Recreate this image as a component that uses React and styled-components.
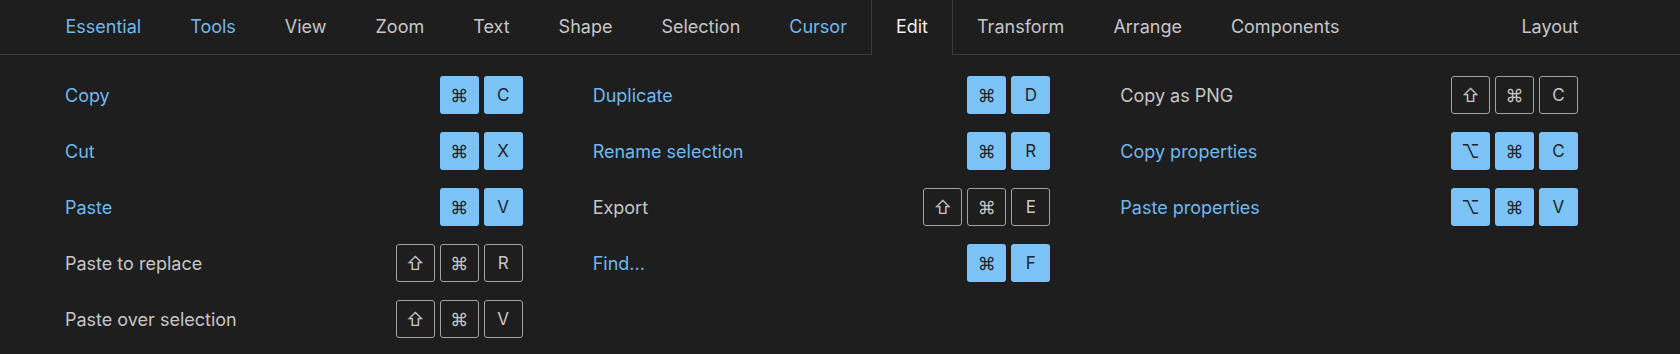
import styled, { createGlobalStyle } from "styled-components";

const GlobalStyle = createGlobalStyle`
  body {
    margin: 0;
    background-color: #1e1e1e;
    font-family: Inter, "Noto Sans", "DejaVu Sans", sans-serif;
  }
`;

const colors = {
  blue: "#70b8ee",
  gray: "#c6c6c6",
  white: "#eeeeee",
};

const Page = styled.div`
  width: 1680px;
  height: 354px;
  background-color: #1e1e1e;
  overflow: hidden;
`;

const TabBar = styled.nav`
  display: flex;
  height: 54px;
  padding: 0 77px 0 41px;
  border-bottom: 1px solid #3a3a3a;
`;

const Tab = styled.div`
  display: flex;
  align-items: center;
  padding: 0 23.5px 2px;
  font-size: 18px;
  color: ${(props) => colors[props.$tone]};
  border-left: 1px solid ${(props) => (props.$active ? "#3a3a3a" : "transparent")};
  border-right: 1px solid ${(props) => (props.$active ? "#3a3a3a" : "transparent")};
  margin-bottom: ${(props) => (props.$active ? "-1px" : "0")};
  background-color: #1e1e1e;
  margin-left: ${(props) => (props.$push ? "auto" : "0")};
`;

const Panel = styled.div`
  display: grid;
  grid-template-columns: repeat(3, 1fr);
  column-gap: 70px;
  padding: 21px 102px 0 65px;
`;

const Column = styled.div`
  display: flex;
  flex-direction: column;
  gap: 18px;
`;

const Row = styled.div`
  display: flex;
  align-items: center;
  justify-content: space-between;
  height: 38px;
`;

const Label = styled.span`
  font-size: 18px;
  color: ${(props) => (props.$on ? colors.blue : colors.gray)};
`;

const Keys = styled.div`
  display: flex;
  gap: 5px;
`;

const Key = styled.span`
  box-sizing: border-box;
  width: 39px;
  height: 38px;
  display: flex;
  align-items: center;
  justify-content: center;
  border-radius: 3px;
  font-family: Inter, "DejaVu Sans", sans-serif;
  font-size: ${(props) => (props.$symbol ? "18px" : "17px")};
  color: ${(props) => (props.$on ? "#1d2630" : "#c6c6c6")};
  background-color: ${(props) => (props.$on ? "#7cc3f8" : "transparent")};
  border: ${(props) => (props.$on ? "none" : "1.5px solid #a2a2a2")};
`;

const tabs = [
  ["Essential", "blue"],
  ["Tools", "blue"],
  ["View", "gray"],
  ["Zoom", "gray"],
  ["Text", "gray"],
  ["Shape", "gray"],
  ["Selection", "gray"],
  ["Cursor", "blue"],
  ["Edit", "white"],
  ["Transform", "gray"],
  ["Arrange", "gray"],
  ["Components", "gray"],
  ["Layout", "gray"],
];

const columns = [
  [
    ["Copy", true, ["⌘", "C"]],
    ["Cut", true, ["⌘", "X"]],
    ["Paste", true, ["⌘", "V"]],
    ["Paste to replace", false, ["⇧", "⌘", "R"]],
    ["Paste over selection", false, ["⇧", "⌘", "V"]],
  ],
  [
    ["Duplicate", true, ["⌘", "D"]],
    ["Rename selection", true, ["⌘", "R"]],
    ["Export", false, ["⇧", "⌘", "E"]],
    ["Find...", true, ["⌘", "F"]],
  ],
  [
    ["Copy as PNG", false, ["⇧", "⌘", "C"]],
    ["Copy properties", true, ["⌥", "⌘", "C"]],
    ["Paste properties", true, ["⌥", "⌘", "V"]],
  ],
];

const symbols = ["⌘", "⇧", "⌥"];

const App = () => {
  return (
    <Page>
      <GlobalStyle />
      <TabBar>
        {tabs.map(([name, tone]) => (
          <Tab
            key={name}
            $tone={tone}
            $active={name === "Edit"}
            $push={name === "Layout"}
          >
            {name}
          </Tab>
        ))}
      </TabBar>
      <Panel>
        {columns.map((rows, i) => (
          <Column key={i}>
            {rows.map(([label, on, keys]) => (
              <Row key={label}>
                <Label $on={on}>{label}</Label>
                <Keys>
                  {keys.map((k, j) => (
                    <Key key={j} $on={on} $symbol={symbols.includes(k)}>
                      {k}
                    </Key>
                  ))}
                </Keys>
              </Row>
            ))}
          </Column>
        ))}
      </Panel>
    </Page>
  );
};

export default App;
